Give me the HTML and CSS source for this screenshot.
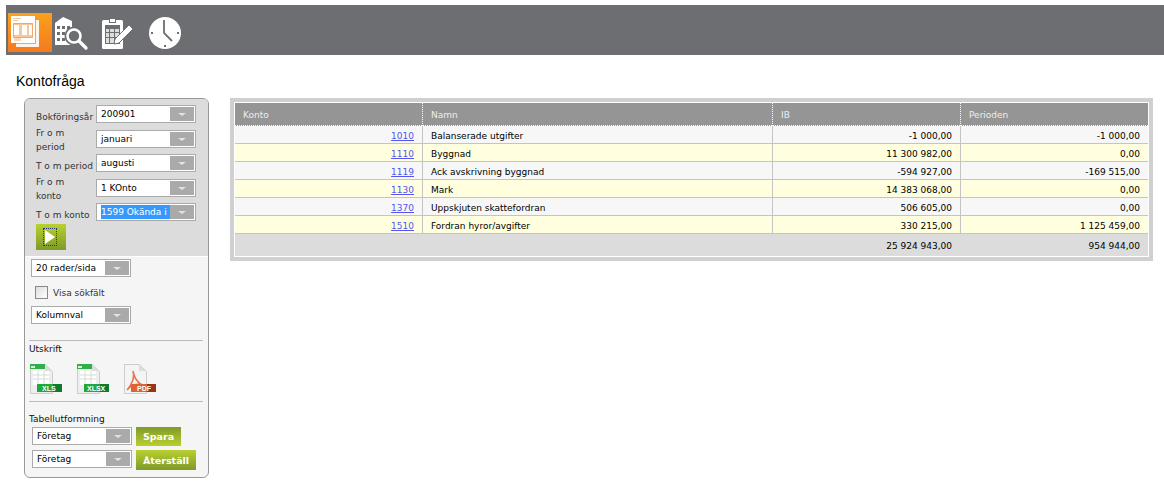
FILE: index.html
```html
<!DOCTYPE html>
<html lang="sv">
<head>
    <meta charset="UTF-8">
    <title>Kontofråga</title>
    <link rel="stylesheet" href="styles.css">
</head>
<body>

    <div class="topbar">
        <a class="topicon active">
            <svg width="44" height="39" viewBox="0 0 44 39">
                <rect x="8" y="7" width="23" height="27" fill="#fff" opacity=".9"/>
                <rect x="27" y="7" width="1" height="24" fill="#f7a35c"/>
                <rect x="8" y="30" width="20" height="1" fill="#f7a35c"/>
                <rect x="3" y="3" width="24" height="27" fill="#fff"/>
                <rect x="5" y="5" width="8" height="1" fill="#f9c79a"/>
                <rect x="5" y="7" width="5" height="1" fill="#f9c79a"/>
                <path d="M5 10h20v2H5zM5 22h20v3H5zM11 10h3v15h-3zM19 10h2v15h-2z" fill="#f9c79a"/>
                <path d="M5.500 10.500h19v14h-19z" fill="none" stroke="#f3a666"/>
                <rect x="6" y="25" width="7" height="3" fill="#fbd5b2"/>
            </svg>
        </a>
        <a class="topicon">
            <svg width="34" height="34" viewBox="0 0 34 34">
                <path d="M0 6 8 0l9 4v24H0z" fill="#fff"/>
                <path d="M2 9h3v3H2zM7 9h3v3H7zM12 9h3v3h-3zM2 15h3v3H2zM7 15h3v3H7zM2 21h3v3H2zM7 21h3v3H7z" fill="#6d6e71"/>
                <circle cx="19" cy="19" r="9.500" fill="#6d6e71"/>
                <circle cx="19" cy="19" r="6.500" fill="#6d6e71" stroke="#fff" stroke-width="2.600"/>
                <path d="m24 24 7 7" stroke="#fff" stroke-width="3.200" stroke-linecap="round" fill="none"/>
            </svg>
        </a>
        <a class="topicon">
            <svg width="34" height="34" viewBox="0 0 34 34">
                <rect x="0" y="3" width="21" height="29" rx="1.500" fill="#fff"/>
                <rect x="7.500" y="1.500" width="6" height="4" fill="#fff" stroke="#6d6e71"/>
                <rect x="3" y="8" width="15" height="19" fill="#6d6e71"/>
                <path d="M4 12h3v3H4zM8 12h4v3H8zM13 12h4v3h-4zM4 16h3v4H4zM8 16h4v4H8zM13 16h4v4h-4zM4 21h3v5H4zM8 21h4v5H8z" fill="#ddd"/>
                <path d="m12 27 1-5 14-14 4 4-14 14z" fill="#fff" stroke="#6d6e71"/>
            </svg>
        </a>
        <a class="topicon">
            <svg width="34" height="34" viewBox="0 0 34 34">
                <circle cx="16" cy="16" r="16" fill="#fff"/>
                <path d="M15 3v13l8 8" stroke="#6d6e71" stroke-width="1.800" fill="none"/>
                <path d="M2 15h2v2H2zM28 15h2v2h-2zM15 28h2v2h-2z" fill="#6d6e71"/>
            </svg>
        </a>
    </div>

    <h1 class="page-title">Kontofråga</h1>

    <div class="content">
        <div class="panel">
            <div class="panel-top">
                <div class="row">
                    <label>Bokföringsår</label>
                    <div class="sel"><span>200901</span><i></i></div>
                </div>
                <div class="row">
                    <label class="two">Fr o m<br>period</label>
                    <div class="sel"><span>januari</span><i></i></div>
                </div>
                <div class="row">
                    <label>T o m period</label>
                    <div class="sel"><span>augusti</span><i></i></div>
                </div>
                <div class="row">
                    <label class="two">Fr o m<br>konto</label>
                    <div class="sel"><span>1 KOnto</span><i></i></div>
                </div>
                <div class="row">
                    <label>T o m konto</label>
                    <div class="sel"><span class="picked">1599 Okända i</span><i></i></div>
                </div>
                <button class="run"><b></b></button>
            </div>

            <div class="panel-bottom">
                <div class="sel"><span>20 rader/sida</span><i></i></div>
                <label class="check"><em></em>Visa sökfält</label>
                <div class="sel"><span>Kolumnval</span><i></i></div>

                <hr class="first">
                <div class="caption">Utskrift</div>
                <div class="exports">
                    <svg width="34" height="32" viewBox="0 0 34 32">
                        <path d="M1.500 1.500h15l7 7v22h-22z" fill="#eee" stroke="#ccc"/>
                        <path d="M1 1h15l2 5H1z" fill="#2fb04a"/>
                        <path d="M2 3h4v2H2z" fill="#d8f0d8"/>
                        <path d="M16 1v7h7z" fill="#ddd"/>
                        <path d="M4 8h16v14H4z" fill="#fff"/>
                        <path d="M4 12h16M4 16h16M9 8v14M15 8v14" stroke="#d5dcd5"/>
                        <rect x="8" y="21" width="16" height="8" class="green"/>
                        <rect x="24" y="21" width="9" height="8" class="green-dark"/>
                        <text x="13" y="28" class="tag">XLS</text>
                    </svg>
                    <svg width="34" height="32" viewBox="0 0 34 32">
                        <path d="M1.500 1.500h15l7 7v22h-22z" fill="#eee" stroke="#ccc"/>
                        <path d="M1 1h15l2 5H1z" fill="#2fb04a"/>
                        <path d="M2 3h4v2H2z" fill="#d8f0d8"/>
                        <path d="M16 1v7h7z" fill="#ddd"/>
                        <path d="M4 8h16v14H4z" fill="#fff"/>
                        <path d="M4 12h16M4 16h16M9 8v14M15 8v14" stroke="#d5dcd5"/>
                        <rect x="8" y="21" width="16" height="8" class="green"/>
                        <rect x="24" y="21" width="9" height="8" class="green-dark"/>
                        <text x="11" y="28" class="tag">XLSX</text>
                    </svg>
                    <svg width="34" height="32" viewBox="0 0 34 32">
                        <path d="M1.500 1.500h15l7 7v22h-22z" fill="#f4f4f4" stroke="#ccc"/>
                        <path d="M16 1v7h7z" fill="#ddd"/>
                        <path d="M10 8c2 6 0 12-6 19 4-5 10-7 15-5-5-3-8-8-9-14z" fill="none" stroke="#e8774a" stroke-width="1.600"/>
                        <rect x="8" y="21" width="16" height="8" class="red"/>
                        <rect x="24" y="21" width="9" height="8" class="red-dark"/>
                        <text x="14" y="28" class="tag">PDF</text>
                    </svg>
                </div>
                <hr class="second">
                <div class="caption">Tabellutformning</div>
                <div class="layout-row">
                    <div class="sel"><span>Företag</span><i></i></div>
                    <button class="btn">Spara</button>
                </div>
                <div class="layout-row">
                    <div class="sel"><span>Företag</span><i></i></div>
                    <button class="btn">Återställ</button>
                </div>
            </div>
        </div>

        <div class="table-wrap">
            <table class="grid">
                <colgroup>
                    <col class="c1"><col class="c2"><col class="c3"><col>
                </colgroup>
                <thead>
                    <tr><th>Konto</th><th>Namn</th><th>IB</th><th>Perioden</th></tr>
                </thead>
                <tbody>
                    <tr><td class="num"><a href="#">1010</a></td><td>Balanserade utgifter</td><td class="num">-1 000,00</td><td class="num">-1 000,00</td></tr>
                    <tr><td class="num"><a href="#">1110</a></td><td>Byggnad</td><td class="num">11 300 982,00</td><td class="num">0,00</td></tr>
                    <tr><td class="num"><a href="#">1119</a></td><td>Ack avskrivning byggnad</td><td class="num">-594 927,00</td><td class="num">-169 515,00</td></tr>
                    <tr><td class="num"><a href="#">1130</a></td><td>Mark</td><td class="num">14 383 068,00</td><td class="num">0,00</td></tr>
                    <tr><td class="num"><a href="#">1370</a></td><td>Uppskjuten skattefordran</td><td class="num">506 605,00</td><td class="num">0,00</td></tr>
                    <tr><td class="num"><a href="#">1510</a></td><td>Fordran hyror/avgifter</td><td class="num">330 215,00</td><td class="num">1 125 459,00</td></tr>
                </tbody>
                <tfoot>
                    <tr><td></td><td></td><td class="num">25 924 943,00</td><td class="num">954 944,00</td></tr>
                </tfoot>
            </table>
        </div>
    </div>

</body>
</html>
```

FILE: styles.css
```css
html, body {
    margin: 0;
    padding: 0;
    background: #fff;
}
body {
    font-family: "DejaVu Sans", sans-serif;
    font-size: 9px;
    color: #000;
    height: 485px;
    overflow: hidden;
}
.topbar {
    display: flex;
    align-items: flex-end;
    height: 50px;
    margin: 5px 0 0 6px;
    background: #6d6e71;
}
.topicon {
    display: block;
    height: 35px;
    padding-top: 4px;
    margin-bottom: 3px;
    margin-left: 13px;
}
.topicon svg {
    display: block;
}
.topicon.active {
    height: 39px;
    padding-top: 0;
    margin-left: 2px;
    background: linear-gradient(#f9a11b, #f47a20);
}
.active + .topicon {
    margin-left: 3px;
}
.page-title {
    margin: 18px 0 0 16px;
    height: 25px;
    font: normal 14px/16px "Liberation Sans", sans-serif;
}
.content {
    display: flex;
    align-items: flex-start;
    margin-left: 24px;
}
.panel {
    width: 183px;
    height: 378px;
    border: 1px solid #999;
    border-radius: 6px;
    overflow: hidden;
    background: #f5f5f5;
    color: #333;
}
.panel-top {
    height: 151px;
    padding: 6px 0 0 11px;
    background: #dcdcdc;
    border-bottom: 1px solid #fff;
}
.row {
    display: flex;
    height: 24.5px;
}
.row label {
    width: 60px;
    height: 14px;
    line-height: 14px;
    margin-top: 5px;
}
.row label.two {
    margin-top: -4px;
}
.sel {
    display: flex;
    justify-content: space-between;
    box-sizing: border-box;
    width: 100px;
    height: 18px;
    padding: 1px;
    border: 1px solid #aaa;
    background: #fff;
    color: #000;
    overflow: hidden;
}
.sel span {
    flex: 1;
    min-width: 0;
    padding-left: 3px;
    line-height: 15px;
    white-space: nowrap;
    overflow: hidden;
}
.sel .picked {
    padding-left: 0;
    margin-left: 3px;
    background: #3399ff;
    color: #fff;
}
.sel i {
    position: relative;
    flex: none;
    width: 24px;
    background: #aaa;
}
.sel i::after {
    content: "";
    position: absolute;
    left: 8px;
    top: 6px;
    border: 4px solid transparent;
    border-top: 3px solid #e4e4e4;
    border-bottom: 0;
}
.run {
    display: block;
    width: 30px;
    height: 26px;
    margin: -4px 0 0 0;
    padding: 0;
    border: 0;
    background: linear-gradient(#b9d02f, #7e9a2a);
}
.run b {
    display: block;
    width: 0;
    height: 0;
    margin-left: 9px;
    border-left: 10px solid #fff;
    border-top: 7px solid transparent;
    border-bottom: 7px solid transparent;
    outline: 1px dotted #223388;
    outline-offset: 1px;
}
.panel-bottom {
    padding: 2px 0 0 6px;
}
.check {
    display: flex;
    align-items: center;
    gap: 5px;
    height: 13px;
    margin: 9px 0 7px 4px;
}
.check em {
    box-sizing: border-box;
    width: 13px;
    height: 13px;
    border: 1px solid #888;
    background: linear-gradient(135deg, #ddd, #fff);
}
hr {
    height: 1px;
    width: 174px;
    margin: 0 0 0 -2px;
    border: 0;
    background: #bbb;
}
hr.first {
    margin-top: 16px;
}
hr.second {
    margin-top: 6px;
}
.caption {
    height: 12px;
    line-height: 12px;
    margin-left: -2px;
    color: #111;
}
hr.first + .caption {
    margin-top: 2px;
}
hr.second + .caption {
    margin-top: 11px;
}
.exports {
    display: flex;
    gap: 13px;
    margin: 8px 0 0 -2px;
}
.exports svg {
    display: block;
}
.green {
    fill: #1fa83e;
}
.green-dark {
    fill: #0d7a30;
}
.red {
    fill: #dd6434;
}
.red-dark {
    fill: #9a3414;
}
.tag {
    font: bold 7px "Liberation Sans", sans-serif;
    fill: #fff;
}
.layout-row {
    display: flex;
    align-items: flex-start;
    gap: 4px;
    margin: 2px 0 0 1px;
    height: 21px;
}
.btn {
    height: 19px;
    padding: 0;
    border: 0;
    width: 45px;
    background: linear-gradient(#7e9a2a, #b9d02f);
    color: #fff;
    font: bold 9.5px "DejaVu Sans", sans-serif;
}
.layout-row + .layout-row .btn {
    width: 60px;
    height: 20px;
    background: linear-gradient(#b9d02f, #7e9a2a);
}
.table-wrap {
    width: 915px;
    margin-left: 21px;
    border: 4px solid #d0d0d0;
}
.grid {
    width: 100%;
    table-layout: fixed;
    border-collapse: separate;
    border-spacing: 0;
    border: 1px solid #fff;
}
.c1 { width: 187px; }
.c2 { width: 350px; }
.c3 { width: 188px; }
.grid th {
    height: 20px;
    padding: 2px 8px 0;
    background: #959595;
    color: #eee;
    font-weight: normal;
    text-align: left;
    border-left: 1px dotted #fff;
    border-bottom: 1px dotted #fff;
}
.grid th:first-child {
    border-left: 0;
}
.grid td {
    height: 15px;
    padding: 2px 8px 0;
    background: #f7f7f7;
    border-left: 1px solid #c4c4c4;
    border-bottom: 1px solid #c4c4c4;
    white-space: nowrap;
}
.grid td:first-child {
    border-left: 0;
}
.grid tbody tr:nth-child(even) td {
    background: #ffffe0;
}
.grid .num {
    text-align: right;
}
.grid a {
    color: #5555ee;
}
.grid tfoot td {
    height: 20px;
    background: #dcdcdc;
    border: 0;
}
```
